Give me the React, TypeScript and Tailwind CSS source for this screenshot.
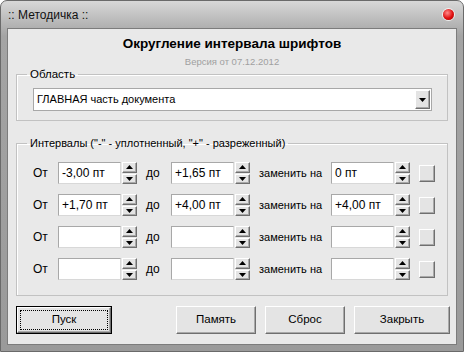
import React from 'react';

const font = { fontFamily: '"Liberation Sans", Arial, sans-serif' };

const Arrow: React.FC<{ up?: boolean }> = ({ up }) => (
  <svg width="7" height="4" viewBox="0 0 7 4" className="block">
    {up ? <polygon points="3.5,0 7,4 0,4" fill="#000" /> : <polygon points="0,0 7,0 3.5,4" fill="#000" />}
  </svg>
);

const raised =
  'bg-[#e4e4e4] border border-t-white border-l-white border-r-[#6f6f6f] border-b-[#6f6f6f] shadow-[inset_-1px_-1px_0_#a9a9a9]';

const Spinner = () => (
  <div className="flex flex-col w-[15px] h-[22px] ml-[1px] gap-[1px]">
    <div className={`${raised} flex-1 flex items-center justify-center`}>
      <Arrow up />
    </div>
    <div className={`${raised} flex-1 flex items-center justify-center`}>
      <Arrow />
    </div>
  </div>
);

const Field: React.FC<{ value: string }> = ({ value }) => (
  <div className="w-[63px] h-[22px] bg-white border border-[#a8a8a8] border-r-[#d8d8d8] border-b-[#d8d8d8] pl-[3px] flex items-center text-[12px] text-black">
    {value}
  </div>
);

const rows = [
  ['-3,00 пт', '+1,65 пт', '0 пт'],
  ['+1,70 пт', '+4,00 пт', '+4,00 пт'],
  ['', '', ''],
  ['', '', ''],
];

const Button: React.FC<{ label: string; width: string; primary?: boolean }> = ({ label, width, primary }) =>
  primary ? (
    <button className={`${width} h-[28px] border border-black p-0`}>
      <div className={`${raised} w-full h-full p-[2px]`}>
        <div className="w-full h-full border border-dotted border-black flex items-center justify-center text-[11.5px] text-black">
          {label}
        </div>
      </div>
    </button>
  ) : (
    <button className={`${width} h-[28px] ${raised} flex items-center justify-center text-[11.5px] text-black`}>
      {label}
    </button>
  );

export default function App() {
  return (
    <div style={font} className="w-[464px] h-[352px] flex flex-col rounded-t-[7px] border border-[#6a6a6a] bg-gradient-to-b from-[#d8d8d8] via-[#a4a4a4] via-[10%] to-[#9a9a9a]">
      <div className="h-[27px] flex items-center justify-between pl-[7px] pr-[9px]">
        <span className="text-[12px] text-[#111]">:: Методичка ::</span>
        <span className="w-[11px] h-[11px] rounded-full bg-[radial-gradient(circle_at_40%_35%,#ff8a8a,#e01010_55%,#a00000)] shadow-[0_0_0_1px_#f0f0f0]" />
      </div>
      <div className="mx-[6px] h-[317px] bg-[#e9e9e9] border border-[#7c7c7c] flex flex-col text-black">
        <div className="text-center text-[13.5px] font-bold leading-[16px] mt-[7px]">Округление интервала шрифтов</div>
        <div className="text-center text-[9.5px] leading-[12px] mt-[4px] text-[#a0a0a0]">Версия от 07.12.2012</div>

        <fieldset className="mx-[8px] mt-[-1px] w-[432px] border border-[#c2c2c2] pt-[7px] pb-[9px] pl-[16px] shadow-[inset_1px_1px_0_#fff]">
          <legend className="ml-[-6px] px-[3px] text-[11.5px] leading-[14px]">Область</legend>
          <div className="w-[399px] h-[23px] bg-white border border-[#a8a8a8] flex items-center justify-between pl-[3px] pr-[1px]">
            <span className="text-[11px]">ГЛАВНАЯ часть документа</span>
            <div className={`${raised} w-[15px] h-[19px] flex items-center justify-center`}>
              <Arrow />
            </div>
          </div>
        </fieldset>

        <fieldset className="mx-[8px] mt-[15px] w-[432px] border border-[#c2c2c2] pt-[12px] pb-[15px] pl-[16px] shadow-[inset_1px_1px_0_#fff] flex flex-col gap-[10px]">
          <legend className="ml-[-6px] px-[3px] text-[11px] leading-[14px]">Интервалы ("-" - уплотненный, "+" - разреженный)</legend>
          {rows.map((r, i) => (
            <div key={i} className="flex items-center h-[22px] text-[11px]">
              <span className="w-[25px] text-[12px]">От</span>
              <Field value={r[0]} />
              <Spinner />
              <span className="w-[25px] ml-[9px] text-[12px]">до</span>
              <Field value={r[1]} />
              <Spinner />
              <span className="w-[72px] ml-[9px]">заменить на</span>
              <Field value={r[2]} />
              <Spinner />
              <div className={`${raised} w-[16px] h-[17px] ml-[9px]`} />
            </div>
          ))}
        </fieldset>

        <div className="flex items-center mt-[10px] ml-[8px]">
          <Button label="Пуск" width="w-[96px]" primary />
          <div className="ml-[64px]" />
          <Button label="Память" width="w-[80px]" />
          <div className="ml-[9px]" />
          <Button label="Сброс" width="w-[80px]" />
          <div className="ml-[9px]" />
          <Button label="Закрыть" width="w-[96px]" />
        </div>
      </div>
    </div>
  );
}
